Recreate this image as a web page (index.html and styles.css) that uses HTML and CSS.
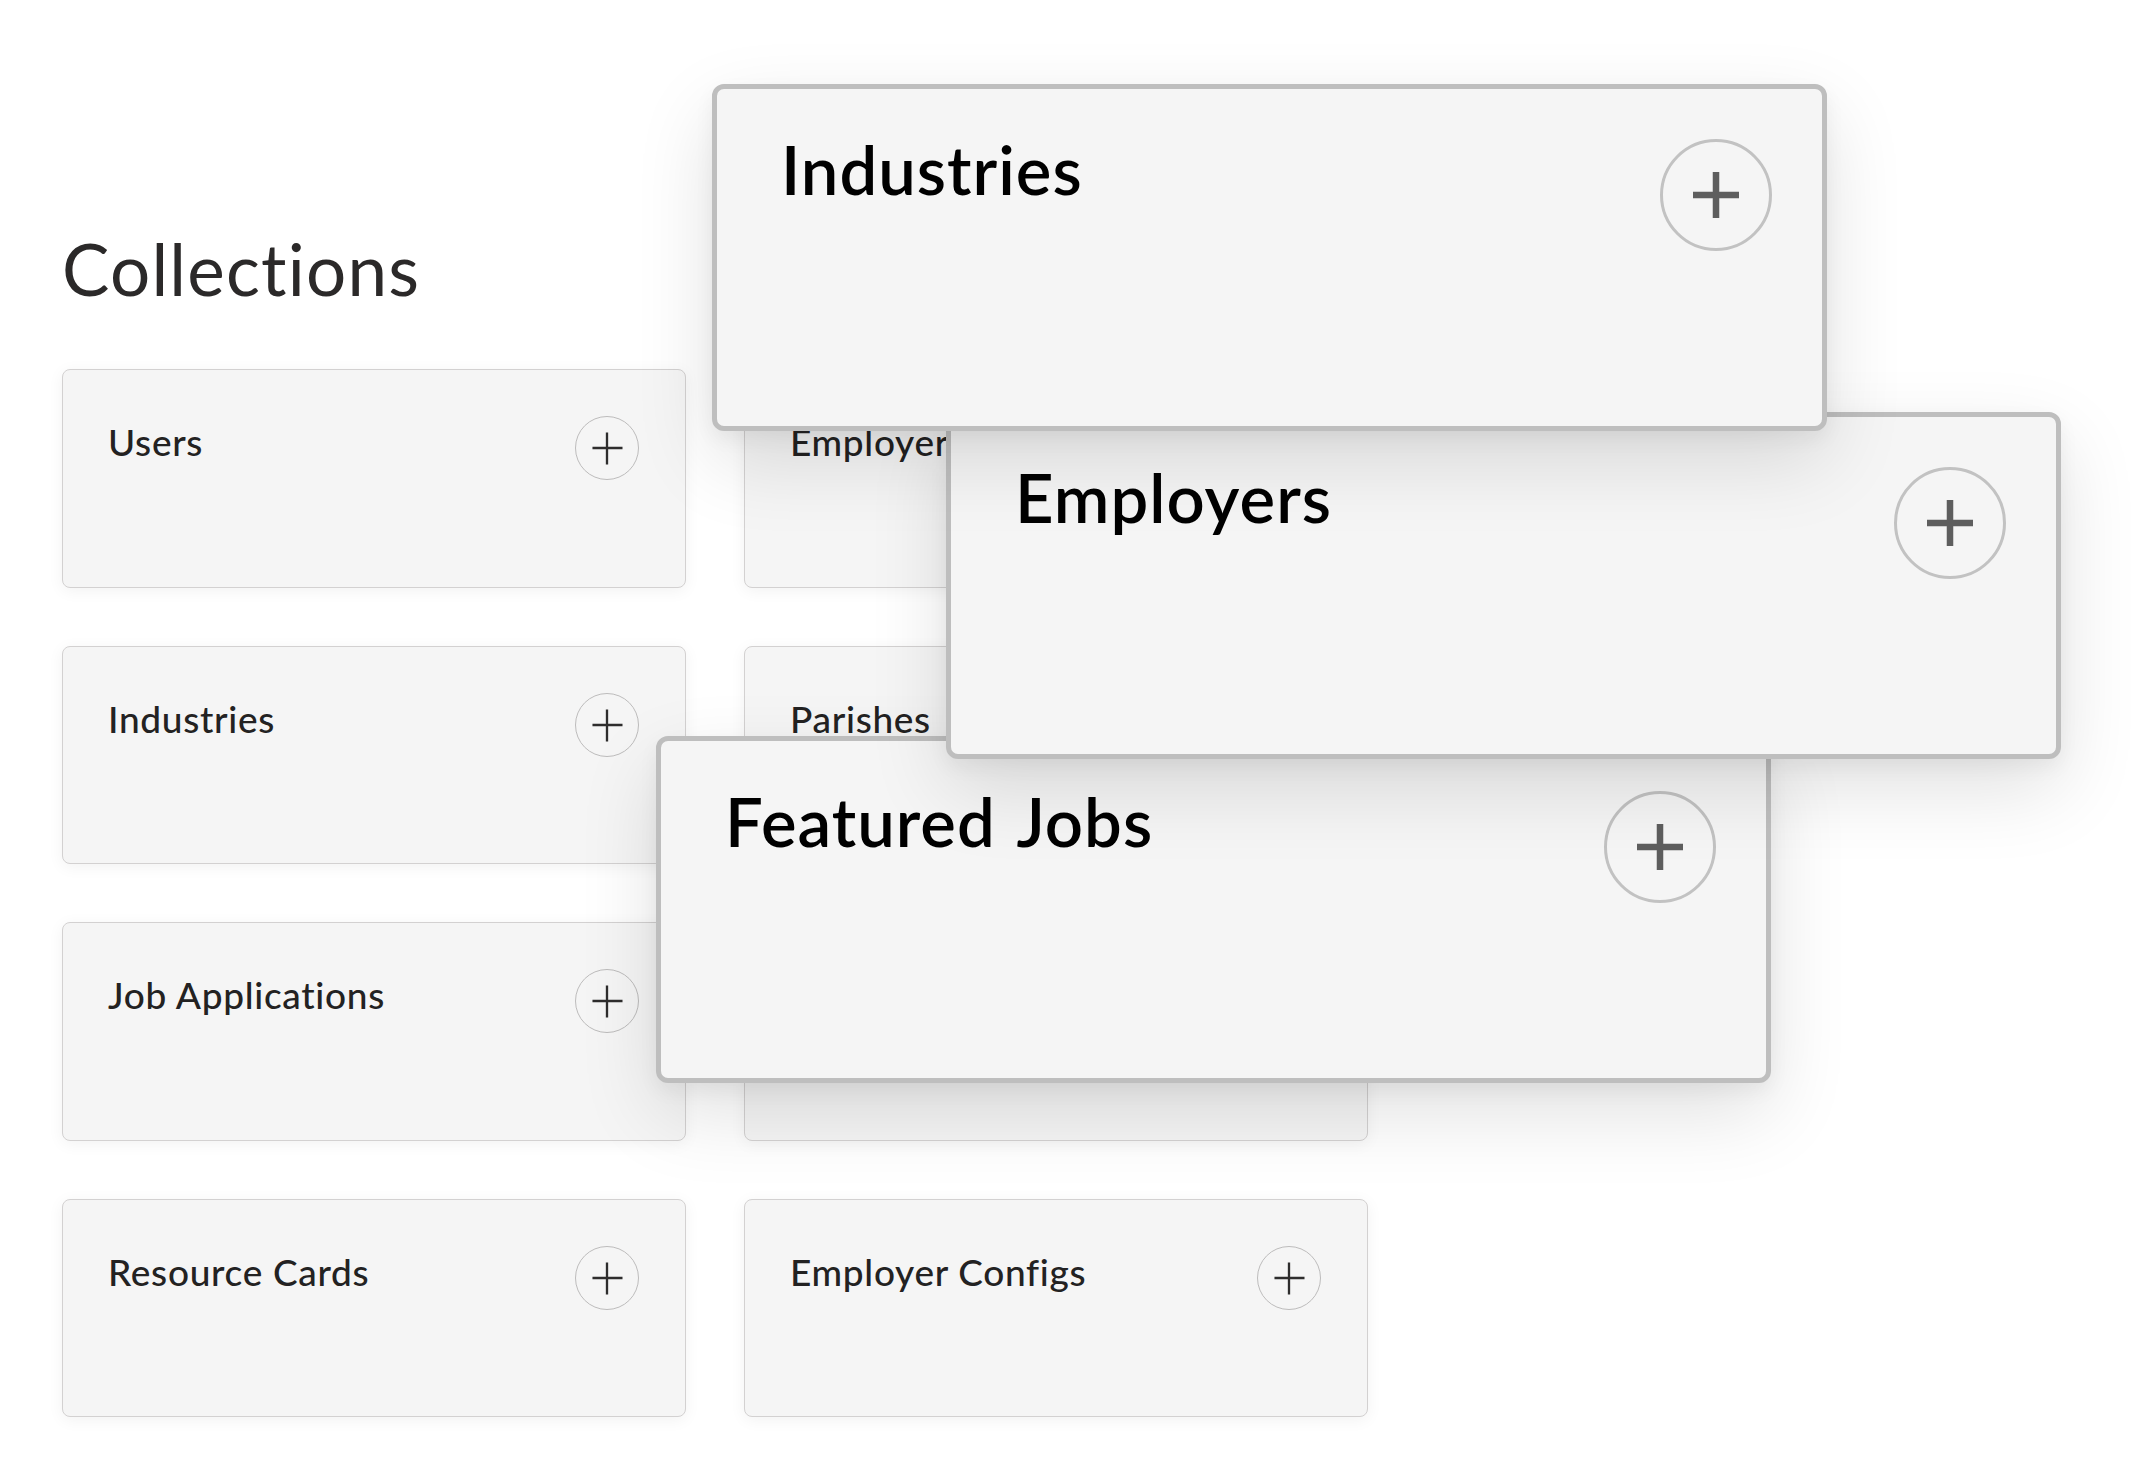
FILE: index.html
```html
<!DOCTYPE html>
<html lang="en">
<head>
<meta charset="utf-8">
<title>Collections</title>
<link rel="stylesheet" href="styles.css">
</head>
<body>
<div class="canvas">
  <h1 class="title">Collections</h1>
  <div class="grid">
    <div class="card"><span class="card-name">Users</span><span class="add"><svg viewBox="0 0 64 64"><path d="M17 32H48M32 16V49"/></svg></span></div>
    <div class="card"><span class="card-name">Employers</span><span class="add"><svg viewBox="0 0 64 64"><path d="M17 32H48M32 16V49"/></svg></span></div>
    <div class="card"><span class="card-name">Industries</span><span class="add"><svg viewBox="0 0 64 64"><path d="M17 32H48M32 16V49"/></svg></span></div>
    <div class="card"><span class="card-name">Parishes</span><span class="add"><svg viewBox="0 0 64 64"><path d="M17 32H48M32 16V49"/></svg></span></div>
    <div class="card"><span class="card-name">Job Applications</span><span class="add"><svg viewBox="0 0 64 64"><path d="M17 32H48M32 16V49"/></svg></span></div>
    <div class="card"><span class="card-name">Featured Jobs</span><span class="add"><svg viewBox="0 0 64 64"><path d="M17 32H48M32 16V49"/></svg></span></div>
    <div class="card"><span class="card-name">Resource Cards</span><span class="add"><svg viewBox="0 0 64 64"><path d="M17 32H48M32 16V49"/></svg></span></div>
    <div class="card"><span class="card-name">Employer Configs</span><span class="add"><svg viewBox="0 0 64 64"><path d="M17 32H48M32 16V49"/></svg></span></div>
  </div>

  <div class="drag drag-industries"><span class="drag-name">Industries</span><span class="add-lg"><svg viewBox="0 0 106 106"><path d="M30 53H76M53 30V76"/></svg></span></div>
  <div class="drag drag-employers"><span class="drag-name">Employers</span><span class="add-lg"><svg viewBox="0 0 106 106"><path d="M30 53H76M53 30V76"/></svg></span></div>
  <div class="drag drag-featured"><span class="drag-name">Featured Jobs</span><span class="add-lg"><svg viewBox="0 0 106 106"><path d="M30 53H76M53 30V76"/></svg></span></div>
</div>
</body>
</html>
```

FILE: styles.css
```css
html, body {
  margin: 0;
  padding: 0;
  background: #ffffff;
}

body {
  font-family: "Lato", "Inter", "Liberation Sans", sans-serif;
  color: #222222;
}

.canvas {
  position: relative;
  width: 2146px;
  height: 1476px;
  padding: 233px 0 0 62px;
  box-sizing: border-box;
  overflow: hidden;
}

.title {
  margin: 0 0 65px 0;
  font-size: 71px;
  line-height: 1;
  font-weight: 400;
  color: #2b2929;
  letter-spacing: 1.2px;
}

.grid {
  display: grid;
  grid-template-columns: 624px 624px;
  grid-auto-rows: 218.5px;
  column-gap: 58px;
  row-gap: 58px;
}

.card {
  box-sizing: border-box;
  display: flex;
  justify-content: space-between;
  align-items: flex-start;
  padding: 46px 46px 0 45px;
  background: #f5f5f5;
  border: 1px solid #d3d1d1;
  border-radius: 8px;
  box-shadow: 0 3px 16px rgba(0, 0, 0, 0.055);
}

.card-name {
  margin-top: 7px;
  font-size: 37px;
  line-height: 1;
  font-weight: 500;
  color: #232222;
  letter-spacing: 0.7px;
}

.add {
  box-sizing: border-box;
  width: 64px;
  height: 64px;
  border: 1px solid #bdbcbc;
  border-radius: 50%;
  display: flex;
  flex-shrink: 0;
}

.add svg {
  width: 62px;
  height: 62px;
  fill: none;
  stroke: #2e2d2d;
  stroke-width: 2.4;
}

.drag {
  position: absolute;
  box-sizing: border-box;
  width: 1115px;
  height: 347px;
  display: flex;
  justify-content: space-between;
  align-items: flex-start;
  padding: 50px 50px 0 64px;
  background: #f5f5f5;
  border: 5px solid #bebebe;
  border-radius: 12px;
  box-shadow: 0 30px 80px rgba(0, 0, 0, 0.12), 0 8px 20px rgba(0, 0, 0, 0.05);
}

.drag-industries {
  left: 712px;
  top: 84px;
  z-index: 3;
}

.drag-employers {
  left: 946px;
  top: 412px;
  z-index: 2;
}

.drag-featured {
  left: 656px;
  top: 736px;
  z-index: 1;
}

.drag-name {
  margin-top: -3px;
  font-size: 67px;
  line-height: 1;
  font-weight: 600;
  color: #000000;
  letter-spacing: 1px;
  word-spacing: 5px;
}

.add-lg {
  box-sizing: border-box;
  width: 112px;
  height: 112px;
  border: 3px solid #c2c2c2;
  border-radius: 50%;
  display: flex;
  flex-shrink: 0;
}

.add-lg svg {
  width: 106px;
  height: 106px;
  fill: none;
  stroke: #5e5e5e;
  stroke-width: 6.5;
}
```
